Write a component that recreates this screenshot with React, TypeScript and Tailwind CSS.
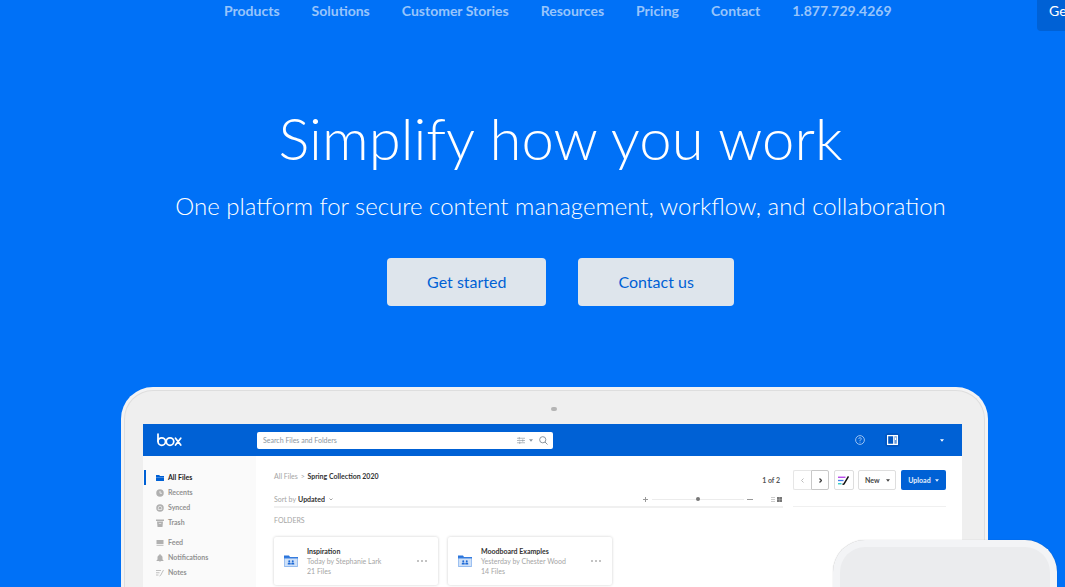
import React, { useState } from 'react';

const navLinks = ['Products', 'Solutions', 'Customer Stories', 'Resources', 'Pricing', 'Contact', '1.877.729.4269'];

type IconName = 'folder' | 'clock' | 'sync' | 'trash' | 'feed' | 'bell' | 'notes';

interface SideItem {
  label: string;
  icon: IconName;
  active?: boolean;
}

const sideGroups: SideItem[][] = [
  [
    { label: 'All Files', icon: 'folder', active: true },
    { label: 'Recents', icon: 'clock' },
    { label: 'Synced', icon: 'sync' },
    { label: 'Trash', icon: 'trash' },
  ],
  [
    { label: 'Feed', icon: 'feed' },
    { label: 'Notifications', icon: 'bell' },
    { label: 'Notes', icon: 'notes' },
  ],
];

const folders = [
  { name: 'Inspiration', meta: 'Today by Stephanie Lark', count: '21 Files' },
  { name: 'Moodboard Examples', meta: 'Yesterday by Chester Wood', count: '14 Files' },
];

function SideIcon({ name }: { name: IconName }) {
  return (
    <svg viewBox="0 0 16 16" className="size-2 shrink-0" fill="currentColor" aria-hidden="true">
      {name === 'folder' && (
        <>
          <path d="M0 2h6.500l1.500 2H16v2H0z" />
          <path d="M0 7h16v6a1 1 0 0 1-1 1H1a1 1 0 0 1-1-1z" />
          <path d="M0 5.500h16v2H0z" opacity=".6" />
        </>
      )}
      {name === 'clock' && (
        <>
          <circle cx="8" cy="8" r="7.500" />
          <path d="M8 4v4.500h4" fill="none" stroke="#fafafa" strokeWidth="1.500" />
        </>
      )}
      {name === 'sync' && (
        <>
          <circle cx="8" cy="8" r="7.500" />
          <path d="M4.500 8a3.500 3.500 0 0 1 7 0v3h-7z" fill="none" stroke="#fafafa" strokeWidth="1.300" />
        </>
      )}
      {name === 'trash' && (
        <>
          <path d="M0 1h16v3H0z" />
          <path d="M2 5h12L13 16H3z" />
          <path d="M5.500 8h5v2h-5z" fill="#fafafa" opacity=".6" />
        </>
      )}
      {name === 'feed' && (
        <>
          <path d="M1 2h14v8H1z" />
          <path d="M1 11.500h14V14H1z" opacity=".7" />
        </>
      )}
      {name === 'bell' && <path d="M7 0h2v2c3 .6 4 3 4 5v4l2 2v1H1v-1l2-2V7c0-2 1-4.400 4-5zM6 14.500h4L8 16z" />}
      {name === 'notes' && (
        <path d="M0 3h10M0 7.500h7M0 12h5M15 2l-6 11-2 1" fill="none" stroke="currentColor" strokeWidth="1.600" />
      )}
    </svg>
  );
}

function BoxLogo() {
  return (
    <svg viewBox="0 0 50 28" className="h-[14px] w-[25px]" fill="none" stroke="#fff" strokeWidth="3.500" strokeLinecap="round" role="img" aria-label="box">
      <path d="M2 2v14" />
      <circle cx="9.500" cy="17" r="7.500" />
      <circle cx="26" cy="17" r="7.500" />
      <path d="M37 10.500l10.500 13.500M47.500 10.500L37 24" />
    </svg>
  );
}

function FolderIcon() {
  return (
    <svg viewBox="0 0 28 24" className="h-3 w-[14px] shrink-0" aria-hidden="true">
      <path d="M0 1h10l2 3h16v4H0z" fill="#2a75dc" />
      <path d="M.700 6.500h26.600v16.500H.700z" fill="#cfe1f8" stroke="#6fa4ea" strokeWidth="1.400" />
      <g fill="#1f6ad6">
        <circle cx="10.500" cy="12.500" r="2" />
        <circle cx="17.500" cy="12.500" r="2" />
        <path d="M7.500 19v-2q0-2 3-2t3 2v2zM14.500 19v-2q0-2 3-2t3 2v2z" />
      </g>
    </svg>
  );
}

function Caret() {
  return (
    <svg viewBox="0 0 8 5" className="h-[3px] w-1" fill="currentColor" aria-hidden="true">
      <path d="M0 0h8L4 5z" />
    </svg>
  );
}

function AppBar() {
  return (
    <div className="flex h-8 items-center bg-[#0061d5] pr-[18px] pl-[14px] text-white">
      <div className="w-[100px]">
        <BoxLogo />
      </div>
      <div className="flex h-[17px] w-[296px] items-center rounded-xs bg-white pr-[5px] pl-[6px] text-[#8b959e]">
        <input
          type="search"
          aria-label="Search Files and Folders"
          placeholder="Search Files and Folders"
          className="min-w-0 flex-1 bg-transparent text-[7px] leading-3 text-[#222] outline-none placeholder:text-[#8b959e]"
        />
        <svg viewBox="0 0 16 14" className="mr-1 h-[7px] w-2" stroke="currentColor" strokeWidth="1.300" aria-hidden="true">
          <path d="M0 2.500h16M0 7h16M0 11.500h16M4.500 0v5M11.500 4.500v5M5.500 9v5" />
        </svg>
        <Caret />
        <svg viewBox="0 0 18 18" className="ml-[6px] size-[9px]" fill="none" stroke="currentColor" strokeWidth="2" aria-hidden="true">
          <circle cx="7.500" cy="7.500" r="6.200" />
          <path d="M12 12l5 5" />
        </svg>
      </div>
      <div className="ml-auto flex items-center">
        <button aria-label="Help" className="mr-5">
          <svg viewBox="0 0 20 20" className="size-[10px]" fill="none" stroke="#a9cbf4" strokeWidth="1.800" aria-hidden="true">
            <circle cx="10" cy="10" r="8.800" />
            <path d="M7.500 8c0-3.500 5-3.500 5-.5 0 2-2.500 2-2.500 4.500M10 13.500v1.800" />
          </svg>
        </button>
        <button aria-label="Toggle side panel" className="mr-10 rounded-sm bg-[#0056c2] p-[2px]">
          <svg viewBox="0 0 22 20" className="h-[10px] w-[11px]" fill="none" stroke="#fff" strokeWidth="2.400" aria-hidden="true">
            <path d="M1.200 1.200h19.600v17.600H1.200zM13.500 1v18" />
            <path d="M14 2h6v16h-6z" fill="#fff" stroke="none" opacity=".4" />
            <path d="M17 5v5" />
          </svg>
        </button>
        <button aria-label="Account">
          <Caret />
        </button>
      </div>
    </div>
  );
}

function Sidebar() {
  return (
    <nav aria-label="Files" className="w-[113px] shrink-0 bg-[#fafafa] pt-[14px] text-[7px]">
      {sideGroups.map((group, i) => (
        <ul key={i} className="mb-[5px]">
          {group.map((item) => (
            <li key={item.label}>
              <a
                href="#"
                className={`ml-px flex h-[15px] items-center gap-1 border-l-2 pl-[10px] font-bold ${
                  item.active ? 'border-[#0061d5] text-[#0061d5]' : 'border-transparent text-[#b0b0b0]'
                }`}
              >
                <SideIcon name={item.icon} />
                <span className={item.active ? 'text-[#222]' : 'text-[#929292]'}>{item.label}</span>
              </a>
            </li>
          ))}
        </ul>
      ))}
    </nav>
  );
}

function FolderCard({ name, meta, count }: { name: string; meta: string; count: string }) {
  return (
    <div className="flex h-12 w-[164px] items-center rounded-xs bg-white pr-[11px] pl-[10px] shadow-[0_0_3px_rgba(0,0,0,0.2)]">
      <FolderIcon />
      <div className="ml-[9px] flex-1 leading-[10px] whitespace-nowrap text-[#a5a5a5]">
        <div className="font-bold text-[#333]">{name}</div>
        <div>{meta}</div>
        <div>{count}</div>
      </div>
      <button aria-label={`More options for ${name}`}>
        <svg viewBox="0 0 20 4" className="h-[2px] w-[10px]" fill="#777" aria-hidden="true">
          <circle cx="2" cy="2" r="1.600" />
          <circle cx="10" cy="2" r="1.600" />
          <circle cx="18" cy="2" r="1.600" />
        </svg>
      </button>
    </div>
  );
}

function FileList() {
  const [size, setSize] = useState(50);

  return (
    <div className="min-w-0 flex-1">
      <div className="flex h-5 items-start justify-between">
        <div className="leading-3 text-[#a5a5a5]">
          <a href="#">All Files</a> <span className="px-px">&gt;</span>{' '}
          <span className="font-bold text-[#333]">Spring Collection 2020</span>
        </div>
        <div className="mr-[3px] leading-5 font-bold text-[#555]">1 of 2</div>
      </div>
      <div className="flex h-[18px] items-center justify-between border-b-2 border-[#f0f0f0] pt-[2px]">
        <div className="flex items-center text-[#a5a5a5]">
          <label htmlFor="sort">Sort by</label>
          <select id="sort" className="ml-[2px] appearance-none bg-transparent font-bold text-[#333]">
            <option>Updated</option>
          </select>
          <svg viewBox="0 0 8 6" className="ml-1 h-[3px] w-1" fill="none" stroke="currentColor" strokeWidth="2" aria-hidden="true">
            <path d="M1 1l3 3 3-3" />
          </svg>
        </div>
        <div className="flex items-center text-[#999]">
          <svg viewBox="0 0 10 10" className="mr-1 size-[5px]" stroke="currentColor" strokeWidth="2" aria-hidden="true">
            <path d="M5 0v10M0 5h10" />
          </svg>
          <input
            type="range"
            aria-label="Thumbnail size"
            value={size}
            onChange={(e) => setSize(Number(e.target.value))}
            className="h-1 w-[92px] appearance-none bg-[linear-gradient(#ececec,#ececec)] bg-[length:100%_1px] bg-center bg-no-repeat [&::-webkit-slider-thumb]:size-1 [&::-webkit-slider-thumb]:appearance-none [&::-webkit-slider-thumb]:rounded-full [&::-webkit-slider-thumb]:bg-[#777]"
          />
          <span className="ml-[3px] h-px w-[6px] bg-[#999]" />
          <button aria-label="List view" className="ml-[18px]">
            <svg viewBox="0 0 8 10" className="h-[5px] w-1" stroke="#bbb" strokeWidth="1.500" aria-hidden="true">
              <path d="M0 1h8M0 5h8M0 9h8" />
            </svg>
          </button>
          <button aria-label="Grid view" className="mr-px ml-[2px]">
            <svg viewBox="0 0 10 10" className="size-[5px]" fill="#777" aria-hidden="true">
              <path d="M0 0h10v10H0z" opacity=".6" />
              <path d="M0 0h4.500v4.500H0zM5.500 0H10v4.500H5.500zM0 5.500h4.500V10H0zM5.500 5.500H10V10H5.500z" />
            </svg>
          </button>
        </div>
      </div>
      <h2 className="mt-[6px] leading-3 text-[#a5a5a5]">FOLDERS</h2>
      <div className="mt-[11px] flex gap-[10px]">
        {folders.map((f) => (
          <FolderCard key={f.name} {...f} />
        ))}
      </div>
    </div>
  );
}

function Actions() {
  const chevron = 'h-[5px] w-[3px]';
  return (
    <div className="w-[153px] shrink-0">
      <div className="flex h-5 justify-between text-[7px] font-bold text-[#444]">
        <div className="flex">
          <button aria-label="Previous page" className="flex w-[18px] items-center justify-center rounded-l-xs border border-r-0 border-[#e6e6e6] text-[#bbb]">
            <svg viewBox="0 0 6 10" className={chevron} fill="none" stroke="currentColor" strokeWidth="2" aria-hidden="true">
              <path d="M5 1L1 5l4 4" />
            </svg>
          </button>
          <button aria-label="Next page" className="flex w-[18px] items-center justify-center rounded-r-xs border border-[#c8c8c8]">
            <svg viewBox="0 0 6 10" className={chevron} fill="none" stroke="currentColor" strokeWidth="2.500" aria-hidden="true">
              <path d="M1 1l4 4-4 4" />
            </svg>
          </button>
        </div>
        <button aria-label="New note" className="flex w-5 items-center justify-center rounded-xs border border-[#dedede]">
          <svg viewBox="0 0 22 18" className="h-[9px] w-[11px]" fill="none" strokeWidth="2.600" aria-hidden="true">
            <path d="M0 2.500h15" stroke="#b13be8" />
            <path d="M0 9h11" stroke="#3f7be8" />
            <path d="M0 15.500h7" stroke="#26c9c3" />
            <path d="M21 1L12 16l-3 1" stroke="#111" strokeWidth="3" />
          </svg>
        </button>
        <button className="flex w-[38px] items-center justify-center gap-[6px] rounded-xs border border-[#dedede]">
          New <Caret />
        </button>
        <button className="flex w-[45px] items-center justify-center gap-1 rounded-xs bg-[#0061d5] text-white/90">
          Upload <Caret />
        </button>
      </div>
      <div className="h-[17px] border-b border-[#f0f0f0]" />
    </div>
  );
}

function Laptop() {
  return (
    <div className="relative mx-auto flex w-full max-w-[867px] flex-1 flex-col rounded-t-[32px] bg-[#f3f3f4] px-[3px] pt-[3px]">
      <div className="flex flex-1 flex-col rounded-t-[29px] border border-b-0 border-[#dedede] bg-[#efefef] pr-[22px] pl-[18px]">
        <div className="flex h-[33px] items-center justify-center pt-[2px] pl-[2px]">
          <span className="h-1 w-[6px] rounded-full bg-[#b5b5b5]" />
        </div>
        <div className="flex flex-1 flex-col bg-white">
          <AppBar />
          <div className="flex flex-1">
            <Sidebar />
            <main className="flex flex-1 gap-[10px] pt-[14px] pr-4 pb-[2px] pl-[18px] text-[7px]">
              <FileList />
              <Actions />
            </main>
          </div>
        </div>
      </div>
      {/* phone standing in front of the laptop */}
      <div className="absolute top-[153px] -right-[69px] bottom-0 w-56 rounded-t-[32px] border-[7px] border-b-0 border-[#f3f4f6] bg-[#ebecee] shadow-[0_0_1px_rgba(0,0,0,0.3)]" />
    </div>
  );
}

export default function App() {
  return (
    <div className="flex min-h-screen flex-col overflow-hidden bg-[#0071f7] font-['Lato',sans-serif] text-white">
      <header className="-mt-[9px] -mr-[68px] flex h-10 items-center justify-between pl-56 text-sm whitespace-nowrap">
        <nav aria-label="Main" className="flex gap-8 font-bold text-white/60">
          {navLinks.map((l) => (
            <a key={l} href="#">{l}</a>
          ))}
        </nav>
        <a href="#" className="flex h-10 w-24 items-center rounded-sm bg-[#0061d5] pl-3">Get started</a>
      </header>

      <section className="mt-[67px] pl-14 text-center">
        <h1 className="text-[58px] leading-[80px] font-light">Simplify how you work</h1>
        <p className="mt-3 text-[24px] leading-8 font-light">
          One platform for secure content management, workflow, and collaboration
        </p>
        <div className="mt-9 flex justify-center gap-8 text-base text-[#0061d5]">
          <button className="h-12 rounded-sm bg-[#dee5ec] px-10">Get started</button>
          <button className="h-12 rounded-sm bg-[#dee5ec] px-10">Contact us</button>
        </div>
      </section>

      <section className="mt-[81px] flex flex-1 flex-col pl-11">
        <Laptop />
      </section>
    </div>
  );
}
